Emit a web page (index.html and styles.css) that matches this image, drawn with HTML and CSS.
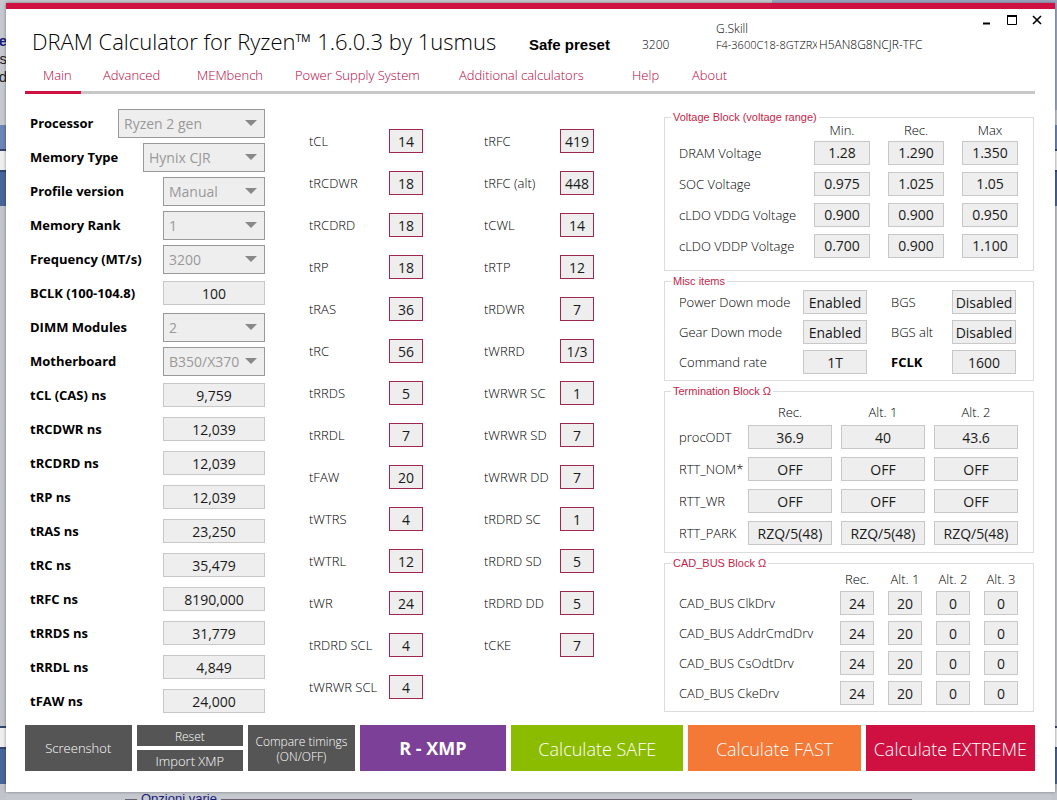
FILE: index.html
```html
<!DOCTYPE html>
<html lang="en">
<head>
    <meta charset="UTF-8">
    <meta name="viewport" content="width=device-width, initial-scale=1.0">
    <title>DRAM Calculator for Ryzen</title>
    <link rel="stylesheet" href="styles.css">
</head>
<body>
    <div class="desktop" aria-hidden="true">
        <div class="desktop-header"></div>
        <div class="desktop-strip left"></div>
        <div class="desktop-strip right"></div>
        <p class="desktop-text"><b>re</b><br>s<br>d</p>
        <p class="desktop-group"><span>Opzioni varie</span></p>
    </div>

    <div class="window">
        <header>
            <h1>DRAM Calculator for Ryzen™ 1.6.0.3 by 1usmus</h1>
            <strong class="preset">Safe preset</strong>
            <span class="speed">3200</span>
            <div class="module">
                <span>G.Skill</span>
                <div class="module-row">
                    <span class="part">F4-3600C18-8GTZRX</span>
                    <span>H5AN8G8NCJR-TFC</span>
                </div>
            </div>
            <div class="window-buttons">
                <button type="button" aria-label="Minimize"><svg width="12" height="12" viewBox="0 0 12 12"><path d="M2 9.5h7" stroke="#000" stroke-width="2"/></svg></button>
                <button type="button" aria-label="Maximize"><svg width="12" height="12" viewBox="0 0 12 12"><path d="M1.5 2v8.5h9V2" fill="none" stroke="#000"/><path d="M1 2h10" stroke="#000" stroke-width="2"/></svg></button>
                <button type="button" aria-label="Close"><svg width="12" height="12" viewBox="0 0 12 12"><path d="M2 2l8 8M10 2l-8 8" stroke="#000" stroke-width="1.6"/></svg></button>
            </div>
        </header>

        <nav>
            <a href="#main" class="active">Main</a>
            <a href="#advanced">Advanced</a>
            <a href="#membench">MEMbench</a>
            <a href="#power">Power Supply System</a>
            <a href="#calculators">Additional calculators</a>
            <a href="#help">Help</a>
            <a href="#about">About</a>
        </nav>

        <main id="main">
            <div class="settings">
                <div class="row">
                    <label for="processor">Processor</label>
                    <select id="processor" class="wide" disabled><option>Ryzen 2 gen</option></select>
                </div>
                <div class="row">
                    <label for="memoryType">Memory Type</label>
                    <select id="memoryType" class="medium" disabled><option>Hynix CJR</option></select>
                </div>
                <div class="row">
                    <label for="profile">Profile version</label>
                    <select id="profile" disabled><option>Manual</option></select>
                </div>
                <div class="row">
                    <label for="rank">Memory Rank</label>
                    <select id="rank" disabled><option>1</option></select>
                </div>
                <div class="row">
                    <label for="frequency">Frequency (MT/s)</label>
                    <select id="frequency" disabled><option>3200</option></select>
                </div>
                <div class="row">
                    <label for="bclk">BCLK (100-104.8)</label>
                    <input type="text" id="bclk" value="100">
                </div>
                <div class="row">
                    <label for="dimm">DIMM Modules</label>
                    <select id="dimm" disabled><option>2</option></select>
                </div>
                <div class="row">
                    <label for="motherboard">Motherboard</label>
                    <select id="motherboard" disabled><option>B350/X370</option></select>
                </div>
                <div class="row">
                    <label for="tclNs">tCL (CAS) ns</label>
                    <input type="text" id="tclNs" value="9,759">
                </div>
                <div class="row">
                    <label for="trcdwrNs">tRCDWR ns</label>
                    <input type="text" id="trcdwrNs" value="12,039">
                </div>
                <div class="row">
                    <label for="trcdrdNs">tRCDRD ns</label>
                    <input type="text" id="trcdrdNs" value="12,039">
                </div>
                <div class="row">
                    <label for="trpNs">tRP ns</label>
                    <input type="text" id="trpNs" value="12,039">
                </div>
                <div class="row">
                    <label for="trasNs">tRAS ns</label>
                    <input type="text" id="trasNs" value="23,250">
                </div>
                <div class="row">
                    <label for="trcNs">tRC ns</label>
                    <input type="text" id="trcNs" value="35,479">
                </div>
                <div class="row">
                    <label for="trfcNs">tRFC ns</label>
                    <input type="text" id="trfcNs" value="8190,000">
                </div>
                <div class="row">
                    <label for="trrdsNs">tRRDS ns</label>
                    <input type="text" id="trrdsNs" value="31,779">
                </div>
                <div class="row">
                    <label for="trrdlNs">tRRDL ns</label>
                    <input type="text" id="trrdlNs" value="4,849">
                </div>
                <div class="row">
                    <label for="tfawNs">tFAW ns</label>
                    <input type="text" id="tfawNs" value="24,000">
                </div>
            </div>

            <div class="timings">
                <div class="row"><label for="tcl">tCL</label><input type="text" id="tcl" value="14"></div>
                <div class="row"><label for="trcdwr">tRCDWR</label><input type="text" id="trcdwr" value="18"></div>
                <div class="row"><label for="trcdrd">tRCDRD</label><input type="text" id="trcdrd" value="18"></div>
                <div class="row"><label for="trp">tRP</label><input type="text" id="trp" value="18"></div>
                <div class="row"><label for="tras">tRAS</label><input type="text" id="tras" value="36"></div>
                <div class="row"><label for="trc">tRC</label><input type="text" id="trc" value="56"></div>
                <div class="row"><label for="trrds">tRRDS</label><input type="text" id="trrds" value="5"></div>
                <div class="row"><label for="trrdl">tRRDL</label><input type="text" id="trrdl" value="7"></div>
                <div class="row"><label for="tfaw">tFAW</label><input type="text" id="tfaw" value="20"></div>
                <div class="row"><label for="twtrs">tWTRS</label><input type="text" id="twtrs" value="4"></div>
                <div class="row"><label for="twtrl">tWTRL</label><input type="text" id="twtrl" value="12"></div>
                <div class="row"><label for="twr">tWR</label><input type="text" id="twr" value="24"></div>
                <div class="row"><label for="trdrdscl">tRDRD SCL</label><input type="text" id="trdrdscl" value="4"></div>
                <div class="row"><label for="twrwrscl">tWRWR SCL</label><input type="text" id="twrwrscl" value="4"></div>
            </div>

            <div class="timings second">
                <div class="row"><label for="trfc">tRFC</label><input type="text" id="trfc" value="419"></div>
                <div class="row"><label for="trfcalt">tRFC (alt)</label><input type="text" id="trfcalt" value="448"></div>
                <div class="row"><label for="tcwl">tCWL</label><input type="text" id="tcwl" value="14"></div>
                <div class="row"><label for="trtp">tRTP</label><input type="text" id="trtp" value="12"></div>
                <div class="row"><label for="trdwr">tRDWR</label><input type="text" id="trdwr" value="7"></div>
                <div class="row"><label for="twrrd">tWRRD</label><input type="text" id="twrrd" value="1/3"></div>
                <div class="row"><label for="twrwrsc">tWRWR SC</label><input type="text" id="twrwrsc" value="1"></div>
                <div class="row"><label for="twrwrsd">tWRWR SD</label><input type="text" id="twrwrsd" value="7"></div>
                <div class="row"><label for="twrwrdd">tWRWR DD</label><input type="text" id="twrwrdd" value="7"></div>
                <div class="row"><label for="trdrdsc">tRDRD SC</label><input type="text" id="trdrdsc" value="1"></div>
                <div class="row"><label for="trdrdsd">tRDRD SD</label><input type="text" id="trdrdsd" value="5"></div>
                <div class="row"><label for="trdrddd">tRDRD DD</label><input type="text" id="trdrddd" value="5"></div>
                <div class="row"><label for="tcke">tCKE</label><input type="text" id="tcke" value="7"></div>
            </div>

            <div class="blocks">
                <fieldset class="voltage">
                    <legend>Voltage Block (voltage range)</legend>
                    <table>
                        <thead>
                            <tr><td></td><th scope="col">Min.</th><th scope="col">Rec.</th><th scope="col">Max</th></tr>
                        </thead>
                        <tbody>
                            <tr>
                                <th scope="row">DRAM Voltage</th>
                                <td><input type="text" aria-label="DRAM voltage min" value="1.28"></td>
                                <td><input type="text" aria-label="DRAM voltage rec" value="1.290"></td>
                                <td><input type="text" aria-label="DRAM voltage max" value="1.350"></td>
                            </tr>
                            <tr>
                                <th scope="row">SOC Voltage</th>
                                <td><input type="text" aria-label="SOC voltage min" value="0.975"></td>
                                <td><input type="text" aria-label="SOC voltage rec" value="1.025"></td>
                                <td><input type="text" aria-label="SOC voltage max" value="1.05"></td>
                            </tr>
                            <tr>
                                <th scope="row">cLDO VDDG Voltage</th>
                                <td><input type="text" aria-label="VDDG voltage min" value="0.900"></td>
                                <td><input type="text" aria-label="VDDG voltage rec" value="0.900"></td>
                                <td><input type="text" aria-label="VDDG voltage max" value="0.950"></td>
                            </tr>
                            <tr>
                                <th scope="row">cLDO VDDP Voltage</th>
                                <td><input type="text" aria-label="VDDP voltage min" value="0.700"></td>
                                <td><input type="text" aria-label="VDDP voltage rec" value="0.900"></td>
                                <td><input type="text" aria-label="VDDP voltage max" value="1.100"></td>
                            </tr>
                        </tbody>
                    </table>
                </fieldset>

                <fieldset class="misc">
                    <legend>Misc items</legend>
                    <div class="misc-grid">
                        <label for="powerDown">Power Down mode</label>
                        <input type="text" id="powerDown" value="Enabled">
                        <label for="bgs" class="right">BGS</label>
                        <input type="text" id="bgs" value="Disabled">
                        <label for="gearDown">Gear Down mode</label>
                        <input type="text" id="gearDown" value="Enabled">
                        <label for="bgsAlt" class="right">BGS alt</label>
                        <input type="text" id="bgsAlt" value="Disabled">
                        <label for="commandRate">Command rate</label>
                        <input type="text" id="commandRate" value="1T">
                        <label for="fclk" class="right bold">FCLK</label>
                        <input type="text" id="fclk" value="1600">
                    </div>
                </fieldset>

                <fieldset class="termination">
                    <legend>Termination Block Ω</legend>
                    <table>
                        <thead>
                            <tr><td></td><th scope="col">Rec.</th><th scope="col">Alt. 1</th><th scope="col">Alt. 2</th></tr>
                        </thead>
                        <tbody>
                            <tr>
                                <th scope="row">procODT</th>
                                <td><input type="text" aria-label="procODT rec" value="36.9"></td>
                                <td><input type="text" aria-label="procODT alt 1" value="40"></td>
                                <td><input type="text" aria-label="procODT alt 2" value="43.6"></td>
                            </tr>
                            <tr>
                                <th scope="row">RTT_NOM*</th>
                                <td><input type="text" aria-label="RTT_NOM rec" value="OFF"></td>
                                <td><input type="text" aria-label="RTT_NOM alt 1" value="OFF"></td>
                                <td><input type="text" aria-label="RTT_NOM alt 2" value="OFF"></td>
                            </tr>
                            <tr>
                                <th scope="row">RTT_WR</th>
                                <td><input type="text" aria-label="RTT_WR rec" value="OFF"></td>
                                <td><input type="text" aria-label="RTT_WR alt 1" value="OFF"></td>
                                <td><input type="text" aria-label="RTT_WR alt 2" value="OFF"></td>
                            </tr>
                            <tr>
                                <th scope="row">RTT_PARK</th>
                                <td><input type="text" aria-label="RTT_PARK rec" value="RZQ/5(48)"></td>
                                <td><input type="text" aria-label="RTT_PARK alt 1" value="RZQ/5(48)"></td>
                                <td><input type="text" aria-label="RTT_PARK alt 2" value="RZQ/5(48)"></td>
                            </tr>
                        </tbody>
                    </table>
                </fieldset>

                <fieldset class="cadbus">
                    <legend>CAD_BUS Block Ω</legend>
                    <table>
                        <thead>
                            <tr><td></td><th scope="col">Rec.</th><th scope="col">Alt. 1</th><th scope="col">Alt. 2</th><th scope="col">Alt. 3</th></tr>
                        </thead>
                        <tbody>
                            <tr>
                                <th scope="row">CAD_BUS ClkDrv</th>
                                <td><input type="text" aria-label="ClkDrv rec" value="24"></td>
                                <td><input type="text" aria-label="ClkDrv alt 1" value="20"></td>
                                <td><input type="text" aria-label="ClkDrv alt 2" value="0"></td>
                                <td><input type="text" aria-label="ClkDrv alt 3" value="0"></td>
                            </tr>
                            <tr>
                                <th scope="row">CAD_BUS AddrCmdDrv</th>
                                <td><input type="text" aria-label="AddrCmdDrv rec" value="24"></td>
                                <td><input type="text" aria-label="AddrCmdDrv alt 1" value="20"></td>
                                <td><input type="text" aria-label="AddrCmdDrv alt 2" value="0"></td>
                                <td><input type="text" aria-label="AddrCmdDrv alt 3" value="0"></td>
                            </tr>
                            <tr>
                                <th scope="row">CAD_BUS CsOdtDrv</th>
                                <td><input type="text" aria-label="CsOdtDrv rec" value="24"></td>
                                <td><input type="text" aria-label="CsOdtDrv alt 1" value="20"></td>
                                <td><input type="text" aria-label="CsOdtDrv alt 2" value="0"></td>
                                <td><input type="text" aria-label="CsOdtDrv alt 3" value="0"></td>
                            </tr>
                            <tr>
                                <th scope="row">CAD_BUS CkeDrv</th>
                                <td><input type="text" aria-label="CkeDrv rec" value="24"></td>
                                <td><input type="text" aria-label="CkeDrv alt 1" value="20"></td>
                                <td><input type="text" aria-label="CkeDrv alt 2" value="0"></td>
                                <td><input type="text" aria-label="CkeDrv alt 3" value="0"></td>
                            </tr>
                        </tbody>
                    </table>
                </fieldset>
            </div>
        </main>

        <footer>
            <button type="button">Screenshot</button>
            <div class="stack">
                <button type="button" class="small">Reset</button>
                <button type="button">Import XMP</button>
            </div>
            <button type="button" class="small">Compare timings (ON/OFF)</button>
            <button type="button" class="xmp">R - XMP</button>
            <button type="button" class="safe">Calculate SAFE</button>
            <button type="button" class="fast">Calculate FAST</button>
            <button type="button" class="extreme">Calculate EXTREME</button>
        </footer>
    </div>
</body>
</html>
```
FILE: styles.css
```css
* {
    box-sizing: border-box;
}

body {
    position: relative;
    margin: 0;
    min-height: 100vh;
    padding: 3px 2px 7px 6px;
    background-color: #c5c8ce;
    font-family: "Open Sans", "Noto Sans", sans-serif;
    font-size: 13px;
    font-weight: 300;
    line-height: 16px;
    color: #000;
}

/* what shows from behind the window */
.desktop {
    position: absolute;
    inset: 0;
    overflow: hidden;
}

.desktop-header {
    position: absolute;
    top: 0;
    right: 0;
    width: 27%;
    height: 110px;
    background-color: #9ca6be;
}

.desktop-strip {
    position: absolute;
    top: 125px;
    width: 6px;
    bottom: 0;
    background: linear-gradient(#6c84b8 0 24px, #33466e 24px 26px, #eee 26px 45px, #33466e 45px 47px, #48649a 47px 81px, #c1c4cb 81px 601px, #33466e 601px 603px, #eee 603px 622px, #33466e 622px 624px, #48649a 624px 659px, #c1c4cb 659px);
}

.desktop-strip.left {
    left: 0;
}

.desktop-strip.right {
    right: 0;
}

.desktop-text {
    position: absolute;
    top: 32px;
    right: calc(100% - 7px);
    margin: 0;
    font: 15px/18px "Liberation Sans", sans-serif;
    text-align: right;
    color: #222;
}

.desktop-text b {
    color: #1b1b7a;
}

.desktop-group {
    position: absolute;
    left: 125px;
    right: 145px;
    bottom: -8px;
    height: 18px;
    margin: 0;
    padding-left: 12px;
    background: linear-gradient(#6b6470, #6b6470) 0 9px / 100% 1px no-repeat;
    font: 13px/18px "Liberation Sans", sans-serif;
    color: #1b1b7a;
}

.desktop-group span {
    padding: 0 4px;
    background-color: #c5c8ce;
}

.window {
    position: relative;
    border-top: 6px solid #cf1141;
    padding: 0 20px 21px 19px;
    background-color: #fff;
    box-shadow: 0 0 3px rgba(0, 0, 0, 0.4);
}

header {
    display: flex;
    align-items: flex-start;
    height: 52px;
    padding-left: 7px;
}

h1 {
    width: 497px;
    margin: 16px 0 0;
    font-size: 22px;
    font-weight: 300;
    line-height: 32px;
    white-space: nowrap;
}

.preset {
    width: 113px;
    margin-top: 28px;
    font: bold 15px/16px "Liberation Sans", sans-serif;
}

.speed {
    width: 74px;
    margin-top: 28px;
    font-size: 12px;
}

.module {
    flex: 1;
    margin-top: 12px;
    font-size: 12px;
    white-space: nowrap;
}

.module-row {
    display: flex;
    gap: 2px;
}

.part {
    width: 101px;
    overflow: hidden;
    font-size: 11px;
}

.window-buttons {
    display: flex;
    gap: 13px;
    margin: 5px -8px 0 0;
}

.window-buttons button {
    width: 12px;
    height: 12px;
    padding: 0;
    border: none;
    background: none;
}

.window-buttons svg {
    display: block;
}

nav {
    display: grid;
    grid-template-columns: 60px 94px 98px 164px 173px 60px auto;
    height: 33px;
    padding: 6px 0 0 18px;
    border-bottom: 3px solid #c8c8c8;
}

nav a {
    position: relative;
    color: #b8003a;
    text-decoration: none;
    white-space: nowrap;
}

nav a.active::after {
    content: "";
    position: absolute;
    left: -18px;
    top: 24px;
    width: 56px;
    height: 3px;
    background-color: #cf1141;
}

main {
    display: grid;
    grid-template-columns: 284fr 175fr 180fr 370fr;
    padding: 12px 1px 0 0;
}

input,
select {
    height: 24px;
    padding: 0;
    border: 1px solid #c8c8c8;
    border-radius: 0;
    background-color: #eee;
    font-family: inherit;
    font-size: 14px;
    font-weight: 400;
    color: #1a1a1a;
}

input {
    text-align: center;
}

select {
    width: 102px;
    height: 29px;
    padding-left: 5px;
    border-color: #999;
    appearance: none;
    background: #eee url('data:image/svg+xml,<svg xmlns="http://www.w3.org/2000/svg" width="12" height="6"><path d="M0 0h12L6 6z" fill="%23888"/></svg>') right 7px center no-repeat;
    color: #999;
    opacity: 1;
}

select.wide {
    width: 147px;
}

select.medium {
    width: 122px;
}

.row {
    display: flex;
    justify-content: space-between;
    align-items: center;
    white-space: nowrap;
}

.settings {
    padding: 0 44px 0 5px;
}

.settings .row {
    height: 34px;
}

.settings label,
.bold {
    font-weight: 700;
}

.settings input {
    width: 102px;
}

.timings {
    padding: 14px 61px 0 0;
}

.timings.second {
    padding-right: 70px;
}

.timings .row {
    height: 42px;
}

.timings input {
    width: 34px;
    border-color: #a02850;
}

.blocks {
    display: flex;
    flex-direction: column;
    gap: 4px;
    margin-top: 5px;
}

fieldset {
    min-width: 0;
    margin: 0;
    padding: 0 15px 3px 14px;
    border: 1px solid #dcdcdc;
}

legend {
    margin-left: -8px;
    padding: 0 2px;
    font: 11px/12px "Liberation Sans", sans-serif;
    color: #c41e48;
}

table {
    width: 100%;
    border-collapse: collapse;
    table-layout: fixed;
}

th,
td {
    padding: 0;
    font-weight: 300;
    white-space: nowrap;
}

thead th {
    text-align: center;
}

tbody th {
    text-align: left;
}

td input,
.misc-grid input {
    display: block;
    width: 100%;
}

.voltage {
    padding-bottom: 9px;
}

.voltage thead tr {
    height: 14px;
    line-height: 14px;
}

.voltage tbody tr {
    height: 31px;
}

.voltage thead th {
    width: 74px;
}

.voltage thead th,
.voltage tbody td {
    padding-left: 18px;
}

.misc-grid {
    display: grid;
    grid-template-columns: 124px 64px 85px 64px;
    grid-auto-rows: 30px;
    align-items: center;
}

.misc-grid .right {
    padding-left: 24px;
}

.termination thead th {
    height: 24px;
    width: 93px;
    padding-bottom: 1px;
    vertical-align: bottom;
}

.termination tbody tr {
    height: 32px;
}

.termination thead th,
.termination tbody td {
    padding-left: 9px;
}

.cadbus thead tr {
    height: 19px;
}

.cadbus tbody tr {
    height: 30px;
}

.cadbus thead th {
    width: 48px;
}

.cadbus thead th,
.cadbus tbody td {
    padding-left: 14px;
}

footer {
    display: grid;
    grid-template-columns: 107fr 107fr 107fr 147fr 173fr 173fr 170fr;
    gap: 5px;
    margin-top: 7px;
}

footer button {
    min-height: 46px;
    padding: 1px 0 0;
    border: none;
    background-color: #555;
    font-family: inherit;
    font-size: 13px;
    font-weight: 300;
    line-height: 15px;
    color: #fff;
}

footer .small {
    font-size: 12px;
}

.stack {
    display: grid;
    gap: 4px;
}

.stack button {
    min-height: 21px;
}

footer .xmp {
    background-color: #7d4098;
    font-size: 18px;
    font-weight: 700;
}

footer .safe,
footer .fast,
footer .extreme {
    padding-top: 3px;
    font-size: 18px;
}

footer .safe {
    background-color: #8cbc00;
}

footer .fast {
    background-color: #f47836;
}

footer .extreme {
    background-color: #cf1141;
}
```
